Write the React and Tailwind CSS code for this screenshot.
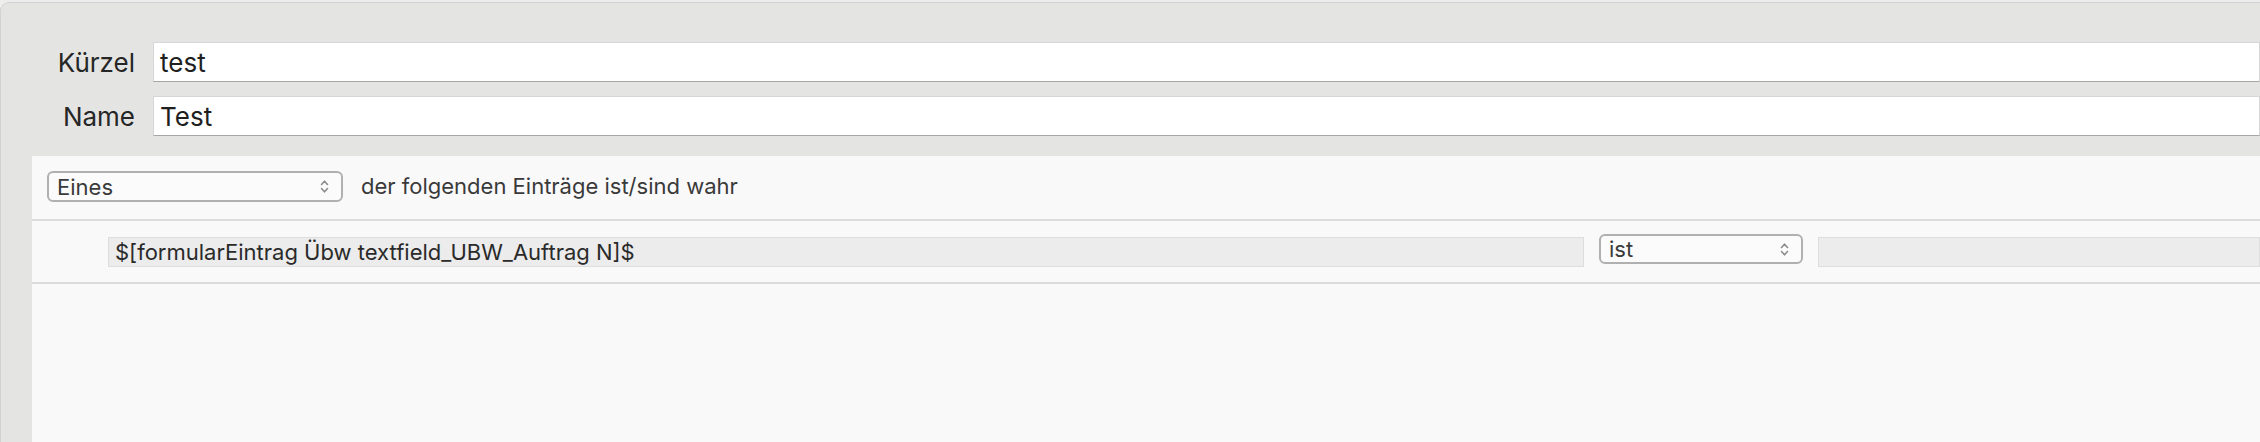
import React from 'react';

const font = { fontFamily: 'Inter, "Liberation Sans", sans-serif' };

// little up/down chevrons used by the macOS style popups
const Chevrons = () => (
  <svg width="9" height="15" viewBox="0 0 9 15" fill="none" stroke="#8c8c8c" strokeWidth="1.6" strokeLinecap="round" strokeLinejoin="round">
    <path d="M1.5 5.5 L4.5 2.2 L7.5 5.5" />
    <path d="M1.5 9.5 L4.5 12.8 L7.5 9.5" />
  </svg>
);

const PopUp = ({ value, className }) => (
  <div className={`flex items-center justify-between rounded-[6px] border-2 border-[#b0b0b0] bg-[#fbfbfb] pl-[8px] pr-[12px] ${className}`}>
    <span className="text-[22px] leading-none text-[#3a3a3a]">{value}</span>
    <Chevrons />
  </div>
);

const FormRow = ({ label, value }) => (
  <div className="flex items-center">
    <div className="w-[134px] shrink-0 text-right text-[26px] text-[#262626]">{label}</div>
    <div className="ml-[18px] flex h-[40px] flex-1 items-center border border-[#d6d6d6] border-b-[#a6a6a6] bg-white pl-[6px] text-[26px] text-[#1f1f1f]">
      {value}
    </div>
  </div>
);

export default function App() {
  return (
    <div className="flex h-[442px] w-[2260px] flex-col overflow-hidden bg-[#efefef]" style={font}>
      {/* thin strip above the panel */}
      <div className="h-[2px] shrink-0 bg-[#ededed]" />

      <div className="flex flex-1 flex-col rounded-tl-[9px] border-l border-t border-[#d2d2d2] bg-[#e4e4e3]">
        {/* Kürzel / Name */}
        <div className="flex flex-col gap-[14px] pt-[39px] pb-[20px]">
          <FormRow label="Kürzel" value="test" />
          <FormRow label="Name" value="Test" />
        </div>

        {/* Regel-Editor */}
        <div className="ml-[31px] flex flex-1 flex-col bg-[#f9f9f9]">
          <div className="flex h-[65px] shrink-0 items-start border-b-2 border-[#dcdcdc] pl-[15px] pt-[15px]">
            <PopUp value="Eines" className="h-[31px] w-[296px]" />
            <span className="ml-[18px] flex h-[31px] items-center text-[22px] text-[#3a3a3a]">der folgenden Einträge ist/sind wahr</span>
          </div>

          <div className="flex h-[63px] shrink-0 items-start gap-[15px] border-b-2 border-[#dcdcdc] pl-[76px] pt-[16px]">
            <div className="flex h-[30px] w-[1476px] shrink-0 items-center border border-[#dedede] bg-[#ececec] pl-[6px] text-[22px] text-[#2a2a2a]">
              $[formularEintrag Übw textfield_UBW_Auftrag N]$
            </div>
            <PopUp value="ist" className="-mt-[3px] h-[30px] w-[204px] shrink-0" />
            <div className="h-[30px] flex-1 border border-[#dedede] bg-[#ececec]" />
          </div>

          <div className="flex-1" />
        </div>
      </div>
    </div>
  );
}
